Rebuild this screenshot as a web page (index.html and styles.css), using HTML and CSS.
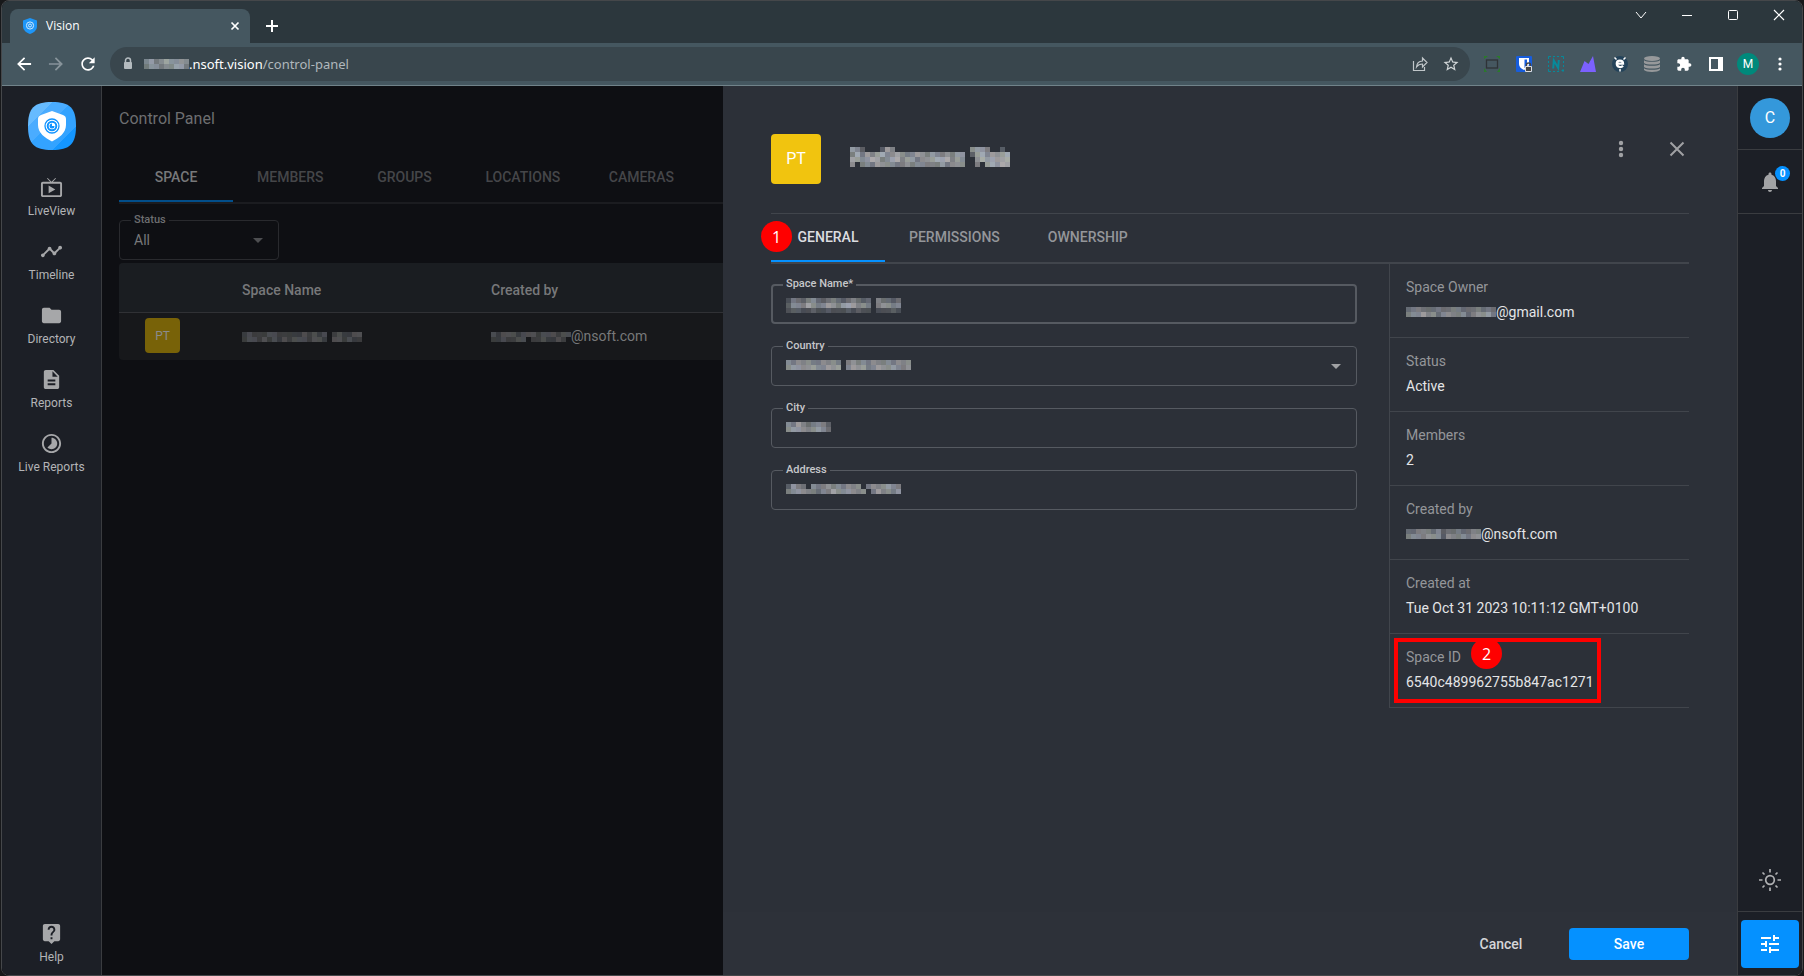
FILE: index.html
```
<!DOCTYPE html>
<html lang="en">
<head>
  <meta charset="UTF-8">
  <meta name="viewport" content="width=device-width, initial-scale=1.0">
  <title>Vision</title>
  <link rel="stylesheet" href="styles.css">
</head>
<body>
  <div class="window">

    <!-- Browser chrome -->
    <div class="titlebar">
      <div class="tab">
        <svg width="16" height="16" viewBox="0 0 16 16">
          <path d="M8 0l7 2.500v6c0 4-4 6.500-7 7.500c-3-1-7-3.500-7-7.500v-6z" fill="#1e96f8"/>
          <circle cx="8" cy="7.500" r="3.600" fill="none" stroke="#cfe8fd"/>
          <circle cx="8" cy="7.500" r="1.500" fill="none" stroke="#cfe8fd"/>
        </svg>
        <span class="tab-title">Vision</span>
        <button class="icon-btn tab-close" aria-label="Close tab">
          <svg width="10" height="10" viewBox="0 0 10 10"><path d="M1.500 1.500l7 7m0-7l-7 7" stroke="#fff" stroke-width="1.700"/></svg>
        </button>
      </div>
      <button class="icon-btn new-tab" aria-label="New tab">
        <svg width="12" height="12" viewBox="0 0 12 12"><path d="M6 0v12M0 6h12" stroke="#fff" stroke-width="2"/></svg>
      </button>
      <div class="window-controls">
        <button class="icon-btn" aria-label="Search tabs"><svg width="12" height="12" viewBox="0 0 12 12"><path d="M1 3l5 6 5-6" fill="none" stroke="#fff"/></svg></button>
        <button class="icon-btn" aria-label="Minimize"><svg width="12" height="12" viewBox="0 0 12 12"><path d="M1 6.500h10" stroke="#fff"/></svg></button>
        <button class="icon-btn" aria-label="Maximize"><svg width="12" height="12" viewBox="0 0 12 12"><rect x="1.500" y="1.500" width="9" height="9" rx="1" fill="none" stroke="#fff"/></svg></button>
        <button class="icon-btn" aria-label="Close"><svg width="12" height="12" viewBox="0 0 12 12"><path d="M1 1l10 10m0-10L1 11" stroke="#fff" stroke-width="1.200"/></svg></button>
      </div>
    </div>

    <div class="toolbar">
      <button class="icon-btn nav-btn" aria-label="Back"><svg width="20" height="20" viewBox="0 0 24 24"><path fill="#fff" d="M20.500 10.800H7.830l5.590-5.390L12 4l-8.300 8 8.300 8 1.410-1.410L7.830 13.200H20.500z"/></svg></button>
      <button class="icon-btn nav-btn" aria-label="Forward"><svg width="20" height="20" viewBox="0 0 24 24"><path fill="#87939a" d="M12 4l-1.410 1.410L16.170 11H3.500v2h12.670l-5.580 5.590L12 20l8.300-8z"/></svg></button>
      <button class="icon-btn nav-btn" aria-label="Reload"><svg width="20" height="20" viewBox="0 0 24 24"><path fill="#fff" d="M17.650 6.350C16.200 4.900 14.210 4 12 4c-4.420 0-7.990 3.580-7.990 8s3.570 8 7.990 8c3.730 0 6.840-2.550 7.730-6h-2.080c-.82 2.330-3.040 4-5.650 4-3.310 0-6-2.690-6-6s2.690-6 6-6c1.660 0 3.140.69 4.220 1.780L13 11h7V4l-2.350 2.350z"/></svg></button>
      <div class="omnibox">
        <svg width="12" height="14" viewBox="0 0 12 14"><path d="M3.500 6V3.500a2.500 2.500 0 0 1 5 0V6" fill="none" stroke="#b4bbbf" stroke-width="1.500"/><rect x="2" y="5" width="8" height="7" rx="1" fill="#b4bbbf"/></svg>
        <div class="url">
          <span class="mosaic" data-cells="574576665/466455774"></span>
          <span>.nsoft.vision<span class="url-path">/control-panel</span></span>
        </div>
        <button class="icon-btn" aria-label="Share"><svg width="18" height="18" viewBox="0 0 18 18"><path d="M2.500 6v9.500h11V12M5.500 12c.3-4 2.500-5.800 6-6V3l4.500 4.500-4.500 4.500V9C9 9 7 9.800 5.500 12z" fill="none" stroke="#c0c6c9" stroke-width="1.200"/></svg></button>
        <button class="icon-btn" aria-label="Bookmark"><svg width="18" height="18" viewBox="0 0 24 24"><path fill="#d0d5d7" d="M22 9.240l-7.190-.62L12 2 9.190 8.630 2 9.240l5.460 4.730L5.820 21 12 17.270 18.180 21l-1.630-7.030L22 9.240zM12 15.400l-3.760 2.270 1-4.280-3.320-2.880 4.380-.38L12 6.100l1.710 4.040 4.380.38-3.320 2.880 1 4.280L12 15.400z"/></svg></button>
      </div>
      <div class="extensions">
        <button class="icon-btn" aria-label="Capture"><svg width="16" height="16" viewBox="0 0 16 16"><rect x="2.500" y="4" width="11" height="8" fill="none" stroke="#2f3337" stroke-width="1.300"/><path d="M0 0h4L0 3zM16 0h-4l4 3zM0 16h3l-3-4zM16 16h-3l3-4z" fill="#2b7a2b"/></svg></button>
        <button class="icon-btn" aria-label="Passwords"><svg width="16" height="16" viewBox="0 0 16 16"><rect width="16" height="16" rx="1" fill="#175ddc"/><path d="M3 2h10v6c0 3-2.500 5-5 6-2.500-1-5-3-5-6z" fill="#fff"/><path d="M8.500 3.500H11V8c0 2-1 3-2.500 4z" fill="#175ddc"/><path d="M10.500 10.500V9a2 2 0 0 1 4 0v1.500" fill="none" stroke="#444" stroke-width="1.400"/><rect x="9" y="10" width="7" height="6" rx="1" fill="#ddd"/><rect x="10" y="11" width="5" height="4" fill="#444"/></svg></button>
        <button class="icon-btn" aria-label="Notes"><svg width="16" height="16" viewBox="0 0 16 16"><path d="M.5 3V.5H3M5 .5h2M9 .5h2M13 .5h2.500V3M.5 5v2M.5 9v2M.5 13v2.500H3M5 15.500h2M9 15.500h2M15.500 5v2M15.500 9v2M15 13v3M13.500 14.500h3" fill="none" stroke="#068a9b"/><path d="M5.200 12.500l.6-8 4.400 7.500.6-8" fill="none" stroke="#068a9b" stroke-width="2"/></svg></button>
        <button class="icon-btn" aria-label="Analytics"><svg width="16" height="16" viewBox="0 0 16 16"><path d="M0 16L4.500 5l4 3L13 0l3 16z" fill="#7b61ff"/></svg></button>
        <button class="icon-btn" aria-label="Ghost"><svg width="16" height="16" viewBox="0 0 16 16"><circle cx="8" cy="8" r="8" fill="#24435a"/><path d="M2.500 1.500l2 2M13.500 1.500l-2 2M8 13v2.500" stroke="#fff" stroke-width="1.500"/><path d="M4.800 7.600h6.200c0-4-6.200-4-6.200 0 0 4.200 4.500 4 6.200 2.200" fill="none" stroke="#fff" stroke-width="2.300"/></svg></button>
        <button class="icon-btn" aria-label="Storage"><svg width="16" height="16" viewBox="0 0 16 16" fill="#97999b"><ellipse cx="8" cy="2.500" rx="8" ry="2.500"/><path d="M0 4.300c2 2 14 2 16 0V7c-2 2-14 2-16 0zM0 8.300c2 2 14 2 16 0V11c-2 2-14 2-16 0zM0 12.300c2 2 14 2 16 0V14c-2 2.500-14 2.500-16 0z"/></svg></button>
        <button class="icon-btn" aria-label="Extensions"><svg width="16" height="16" viewBox="0 0 24 24"><path fill="#fff" d="M20.500 11H19V7c0-1.100-.9-2-2-2h-4V3.500C13 2.120 11.880 1 10.500 1S8 2.120 8 3.500V5H4c-1.100 0-1.990.9-1.990 2v3.800H3.500c1.490 0 2.700 1.210 2.700 2.700s-1.210 2.700-2.700 2.700H2V20c0 1.100.9 2 2 2h3.800v-1.500c0-1.490 1.210-2.700 2.700-2.700 1.490 0 2.700 1.210 2.700 2.700V22H17c1.100 0 2-.9 2-2v-4h1.500c1.380 0 2.500-1.120 2.500-2.500S21.880 11 20.500 11z"/></svg></button>
        <button class="icon-btn" aria-label="Side panel"><svg width="14" height="14" viewBox="0 0 14 14"><path fill="#fff" fill-rule="evenodd" d="M0 0h14v14H0zM2 2v10h7V2z"/></svg></button>
        <button class="icon-btn profile" aria-label="Profile">M</button>
        <button class="icon-btn" aria-label="Browser menu"><svg width="4" height="14" viewBox="0 0 4 14" fill="#fff"><circle cx="2" cy="2" r="1.600"/><circle cx="2" cy="7" r="1.600"/><circle cx="2" cy="12" r="1.600"/></svg></button>
      </div>
    </div>

    <div class="app">

      <!-- Left navigation -->
      <nav class="sidebar">
        <a class="logo" href="#" aria-label="Vision">
          <svg width="48" height="48" viewBox="0 0 48 48">
            <defs>
              <linearGradient id="logoFill" x1="0" y1="0" x2="1" y2="1">
                <stop offset="0" stop-color="#66bbff"/>
                <stop offset=".25" stop-color="#66bbff"/>
                <stop offset=".25" stop-color="#4aacff"/>
                <stop offset=".45" stop-color="#4aacff"/>
                <stop offset=".45" stop-color="#33a3ff"/>
                <stop offset=".75" stop-color="#33a3ff"/>
                <stop offset=".75" stop-color="#1496ff"/>
                <stop offset="1" stop-color="#1496ff"/>
              </linearGradient>
            </defs>
            <path d="M24 0C42 0 48 6 48 24S42 48 24 48 0 42 0 24 6 0 24 0z" fill="url(#logoFill)"/>
            <path d="M24 9l11 4q3 1 3 4v6c0 8-7 13-14 16.500C17 36 10 31 10 23v-6q0-3 3-4z" fill="#fff"/>
            <circle cx="24" cy="24" r="7" fill="none" stroke="#1093ff" stroke-width="1.300"/>
            <circle cx="24" cy="24" r="4.300" fill="none" stroke="#1093ff" stroke-width="2"/>
            <path d="M24 24v-2.500a2.500 2.500 0 1 0 2.500 2.500z" fill="#1093ff"/>
          </svg>
        </a>
        <a class="nav-item" href="#"><svg viewBox="0 0 24 24"><path d="M21 6h-7.590l3.290-3.290L16 2l-4 4-4-4-.71.71L10.590 6H3c-1.100 0-2 .89-2 2v12c0 1.100.9 2 2 2h18c1.100 0 2-.9 2-2V8c0-1.110-.9-2-2-2zm0 14H3V8h18v12zM9 10v8l7-4z"/></svg>LiveView</a>
        <a class="nav-item" href="#"><svg viewBox="0 0 24 24"><path d="M23 8c0 1.100-.9 2-2 2-.18 0-.35-.02-.51-.07l-3.560 3.550c.05.16.07.34.07.52 0 1.100-.9 2-2 2s-2-.9-2-2c0-.18.02-.36.07-.52l-2.550-2.550c-.16.05-.34.07-.52.07s-.36-.02-.52-.07l-4.550 4.560c.05.16.07.33.07.51 0 1.100-.9 2-2 2s-2-.9-2-2 .9-2 2-2c.18 0 .35.02.51.07l4.560-4.550C8.020 9.360 8 9.180 8 9c0-1.100.9-2 2-2s2 .9 2 2c0 .18-.02.36-.07.52l2.550 2.550c.16-.05.34-.07.52-.07s.36.02.52.07l3.550-3.560C19.020 8.350 19 8.180 19 8c0-1.100.9-2 2-2s2 .9 2 2z"/></svg>Timeline</a>
        <a class="nav-item" href="#"><svg viewBox="0 0 24 24"><path d="M10 4H4c-1.100 0-1.990.9-1.990 2L2 18c0 1.100.9 2 2 2h16c1.100 0 2-.9 2-2V8c0-1.100-.9-2-2-2h-8l-2-2z"/></svg>Directory</a>
        <a class="nav-item" href="#"><svg viewBox="0 0 24 24"><path d="M14 2H6c-1.100 0-1.990.9-1.990 2L4 20c0 1.100.89 2 1.990 2H18c1.100 0 2-.9 2-2V8l-6-6zm2 16H8v-2h8v2zm0-4H8v-2h8v2zm-3-5V3.500L18.500 9H13z"/></svg>Reports</a>
        <a class="nav-item" href="#"><svg viewBox="0 0 24 24"><path d="M16.240 7.760C15.070 6.590 13.540 6 12 6v6l-4.240 4.240c2.340 2.340 6.140 2.340 8.490 0 2.340-2.340 2.340-6.140-.01-8.480zM12 2C6.480 2 2 6.480 2 12s4.480 10 10 10 10-4.480 10-10S17.520 2 12 2zm0 18c-4.420 0-8-3.580-8-8s3.580-8 8-8 8 3.580 8 8-3.580 8-8 8z"/></svg>Live Reports</a>
        <a class="nav-item nav-help" href="#"><svg viewBox="0 0 24 24"><path d="M19 2H5c-1.110 0-2 .9-2 2v14c0 1.100.89 2 2 2h4l3 3 3-3h4c1.100 0 2-.9 2-2V4c0-1.100-.9-2-2-2zm-6 16h-2v-2h2v2zm2.070-7.750l-.9.920C13.450 11.900 13 12.500 13 14h-2v-.5c0-1.100.45-2.100 1.170-2.830l1.240-1.260c.37-.36.59-.86.59-1.410 0-1.100-.9-2-2-2s-2 .9-2 2H8c0-2.210 1.790-4 4-4s4 1.790 4 4c0 .88-.36 1.680-.93 2.250z"/></svg>Help</a>
      </nav>

      <!-- Page behind the drawer -->
      <main class="page">
        <h1>Control Panel</h1>
        <div class="tabs page-tabs">
          <button class="active">SPACE</button>
          <button>MEMBERS</button>
          <button>GROUPS</button>
          <button>LOCATIONS</button>
          <button>CAMERAS</button>
        </div>
        <div class="field status-filter">
          <label for="status">Status</label>
          <select id="status"><option>All</option></select>
          <span class="caret"></span>
        </div>
        <table class="spaces">
          <thead>
            <tr><th></th><th>Space Name</th><th>Created by</th></tr>
          </thead>
          <tbody>
            <tr>
              <td><span class="avatar avatar-small">PT</span></td>
              <td><span class="mosaic" data-cells="23222332222232323.232233/23323232323332332.332322"></span></td>
              <td><span class="mosaic" data-cells="3233323332333233/2232233.2232232"></span>@nsoft.com</td>
            </tr>
          </tbody>
        </table>
      </main>

      <!-- Space drawer -->
      <section class="drawer">
        <div class="drawer-body">
          <header class="drawer-header">
            <span class="avatar">PT</span>
            <h2><span class="mosaic" data-cells="763...375...............6775..3./58575786676567657656577.37867678/77678756885775667888576..6878778/6.565766655656655575666..5.78787"></span></h2>
            <button class="icon-btn more" aria-label="More"><svg width="6" height="18" viewBox="0 0 6 18" fill="#a0a1a4"><circle cx="3" cy="3" r="2.200"/><circle cx="3" cy="9" r="2.200"/><circle cx="3" cy="15" r="2.200"/></svg></button>
            <button class="icon-btn" aria-label="Close drawer"><svg width="16" height="16" viewBox="0 0 16 16"><path d="M1.500 1.500l13 13m0-13l-13 13" stroke="#a0a1a4" stroke-width="2"/></svg></button>
          </header>
          <div class="tabs drawer-tabs">
            <button class="active">GENERAL<span class="step step-general">1</span></button>
            <button>PERMISSIONS</button>
            <button>OWNERSHIP</button>
          </div>
          <div class="columns">
            <form class="form">
              <div class="field focused">
                <label for="name">Space Name*</label>
                <input id="name" type="text">
                <span class="mosaic" data-cells="25435643454345434.54434/36657656765787565.56656/23322322322232322.22232"></span>
              </div>
              <div class="field">
                <label for="country">Country</label>
                <select id="country"><option></option></select>
                <span class="mosaic" data-cells="65656556565.5656565565656/67766766767.6767567667656"></span>
                <span class="caret"></span>
              </div>
              <div class="field">
                <label for="city">City</label>
                <input id="city" type="text">
                <span class="mosaic" data-cells="657545653/677656764"></span>
              </div>
              <div class="field">
                <label for="address">Address</label>
                <input id="address" type="text">
                <span class="mosaic" data-cells="3754.6556565656.5656765/5676554657667656.575657"></span>
              </div>
            </form>
            <dl class="details">
              <div><dt>Space Owner</dt><dd><span class="mosaic" data-cells="455444544554445454/566756466556456675"></span>@gmail.com</dd></div>
              <div><dt>Status</dt><dd>Active</dd></div>
              <div><dt>Members</dt><dd>2</dd></div>
              <div><dt>Created by</dt><dd><span class="mosaic" data-cells="445554634454455/566566636556566"></span>@nsoft.com</dd></div>
              <div><dt>Created at</dt><dd>Tue Oct 31 2023 10:11:12 GMT+0100</dd></div>
              <div class="space-id"><dt>Space ID</dt><dd>6540c489962755b847ac1271</dd><span class="callout"></span><span class="step step-id">2</span></div>
            </dl>
          </div>
        </div>
        <footer class="drawer-footer">
          <button class="btn">Cancel</button>
          <button class="btn btn-primary">Save</button>
        </footer>
      </section>

      <!-- Right rail -->
      <aside class="rail">
        <button class="rail-cell" aria-label="Account"><span class="user">C</span></button>
        <button class="rail-cell" aria-label="Notifications">
          <span class="bell"><svg width="24" height="24" viewBox="0 0 24 24"><path fill="#a2a3a5" d="M12 22c1.100 0 2-.9 2-2h-4c0 1.100.89 2 2 2zm6-6v-5c0-3.070-1.640-5.640-4.500-6.320V4c0-.83-.67-1.500-1.500-1.500s-1.500.67-1.500 1.500v.68C7.630 5.360 6 7.920 6 11v5l-2 2v1h16v-1l-2-2z"/></svg><span class="count">0</span></span>
        </button>
        <button class="rail-cell theme" aria-label="Theme"><svg width="22" height="22" viewBox="0 0 22 22" fill="none" stroke="#b0b1b3" stroke-width="1.700"><circle cx="11" cy="11" r="4.300"/><path d="M11 0v3.500M11 18.500V22M0 11h3.500M18.500 11H22M3.500 3.500l2 2M16.500 16.500l2 2M3.500 18.500l2-2M16.500 5.500l2-2"/></svg></button>
        <button class="settings" aria-label="Control panel"><svg width="24" height="24" viewBox="0 0 24 24"><path fill="#fff" d="M3 17v2h6v-2H3zM3 5v2h10V5H3zm10 16v-2h8v-2h-8v-2h-2v6h2zM7 9v2H3v2h4v2h2V9H7zm14 4v-2H11v2h10zm-6-4h2V7h4V5h-4V3h-2v6z"/></svg></button>
      </aside>
    </div>
  </div>
  <script src="mosaic.js"></script>
</body>
</html>
```
FILE: styles.css
```
* {
  box-sizing: border-box;
}
body {
  margin: 0;
  background: #17181a;
  color: #e4e5e7;
  font: 14px/20px Roboto, sans-serif;
  overflow: hidden;
}
button, input, select {
  font: inherit;
  color: inherit;
  margin: 0;
}
button {
  background: none;
  border: none;
  padding: 0;
  cursor: pointer;
}
a {
  color: inherit;
  text-decoration: none;
}
svg {
  display: block;
}
.window {
  display: flex;
  flex-direction: column;
  height: 100vh;
  border: 1px solid #45474a;
  border-radius: 8px;
  margin: 0 1px;
  overflow: hidden;
}
.icon-btn {
  display: flex;
  align-items: center;
  justify-content: center;
}

/* browser chrome */
.titlebar {
  display: flex;
  align-items: flex-end;
  height: 42px;
  flex: none;
  background: #2c373d;
  padding-left: 8px;
  font-family: "Open Sans", sans-serif;
}
.tab {
  display: flex;
  align-items: center;
  gap: 8px;
  width: 240px;
  height: 34px;
  padding: 0 10px 0 12px;
  border-radius: 8px 8px 0 0;
  background: #455760;
  font-size: 12px;
  color: #fff;
}
.tab-close {
  margin-left: auto;
}
.new-tab {
  width: 28px;
  height: 34px;
  margin-left: 8px;
}
.window-controls {
  display: flex;
  align-self: flex-start;
  margin-left: auto;
}
.window-controls button {
  width: 46px;
  height: 28px;
}
.toolbar {
  display: flex;
  align-items: center;
  height: 43px;
  flex: none;
  padding: 0 6px;
  background: #455760;
  border-bottom: 1px solid #71838a;
}
.nav-btn {
  width: 32px;
  height: 32px;
}
.omnibox {
  display: flex;
  align-items: center;
  flex: 1;
  height: 34px;
  margin-left: 6px;
  padding: 0 10px 0 12px;
  border-radius: 17px;
  background: #39464d;
  font: 13px/20px "Noto Sans", sans-serif;
  color: #fff;
}
.omnibox button {
  width: 18px;
  margin-left: 13px;
}
.url {
  display: flex;
  align-items: center;
  flex: 1;
  margin-left: 10px;
}
.url-path {
  color: #b0b8bc;
}
.extensions {
  display: flex;
  margin-left: 6px;
}
.extensions button {
  width: 32px;
  height: 32px;
}
.extensions .profile {
  width: 22px;
  height: 22px;
  margin: 5px;
  border-radius: 50%;
  background: #00897b;
  color: #fff;
  font-size: 12px;
}

/* app shell */
.app {
  display: flex;
  flex: 1;
  min-height: 0;
  background: #0e0f13;
}
.sidebar {
  display: flex;
  flex-direction: column;
  align-items: center;
  width: 100px;
  flex: none;
  background: #1c1f26;
  border-right: 1px solid #3a3c40;
}
.logo {
  margin: 16px 0 20px;
}
.nav-item {
  display: flex;
  flex-direction: column;
  align-items: center;
  height: 64px;
  padding-top: 6px;
  font-size: 12px;
  line-height: 20px;
  color: #b3b4b6;
}
.nav-item svg {
  width: 23px;
  height: 23px;
  margin-bottom: 2px;
  fill: #a6a7a9;
}
.nav-help {
  margin-top: auto;
  height: 59px;
}

.page {
  width: 621px;
  flex: none;
  padding: 23px 0 0 17px;
  overflow: hidden;
}
h1 {
  margin: 0 0 22px;
  font-size: 16px;
  line-height: 20px;
  font-weight: 400;
  color: #6d6e70;
}
.tabs {
  display: flex;
  font-weight: 500;
}
.tabs button {
  position: relative;
  min-width: 114px;
  padding: 0 24px;
  border-bottom: 2px solid transparent;
}
.page-tabs {
  height: 53px;
  border-bottom: 2px solid #1b1c20;
  color: #454649;
}
.page-tabs button {
  padding-top: 2px;
}
.page-tabs .active {
  color: #77787a;
  border-color: #024e8a;
}

/* outlined fields */
.field {
  position: relative;
  height: 40px;
}
.field label {
  position: absolute;
  top: -7px;
  left: 12px;
  padding: 0 3px;
  font-size: 11px;
  line-height: 14px;
  font-weight: 500;
  color: #c6c7ca;
  background: #2c3038;
}
.field input, .field select {
  display: block;
  width: 100%;
  height: 40px;
  padding: 0 14px;
  border: 1px solid #565a61;
  border-radius: 4px;
  background: transparent;
  appearance: none;
  outline: none;
}
.field.focused input {
  border-width: 2px;
}
.field .mosaic {
  position: absolute;
  left: 15px;
  top: 14px;
}
.caret {
  position: absolute;
  right: 16px;
  top: 18px;
  border: 5px solid transparent;
  border-top-color: #a0a1a4;
  border-bottom: none;
}
.status-filter {
  width: 160px;
  margin: 16px 0 3px;
  color: #77787a;
}
.status-filter label {
  background: #0e0f13;
  color: #6d6e70;
}
.status-filter select {
  border-color: #292a2e;
}
.status-filter .caret {
  border-top-color: #4d4e51;
}

.spaces {
  width: 100%;
  border-collapse: separate;
  border-spacing: 0;
  table-layout: fixed;
  border-radius: 4px 0 0 4px;
  overflow: hidden;
  background: #17181b;
  color: #77787a;
}
.spaces th {
  height: 50px;
  padding: 4px 0 0;
  text-align: left;
  font-weight: 500;
  background: #1a1d21;
  border-bottom: 1px solid #303135;
}
.spaces td {
  height: 47px;
  padding: 0 0 2px;
}
.spaces th:first-child {
  width: 123px;
}
.spaces th:nth-child(2) {
  width: 249px;
}
.spaces td:first-child {
  padding-left: 26px;
}
.avatar {
  display: flex;
  align-items: center;
  justify-content: center;
  width: 50px;
  height: 50px;
  border-radius: 4px;
  background: #f1c40f;
  color: #fff;
  font-size: 16px;
}
.avatar-small {
  width: 35px;
  height: 35px;
  background: #786208;
  color: #8a8b8c;
  font-size: 12px;
}

/* drawer */
.drawer {
  display: flex;
  flex-direction: column;
  flex: 1;
  min-width: 0;
  background: #2c3038;
}
.drawer-body {
  flex: 1;
  padding: 0 48px;
}
.drawer-header {
  display: flex;
  align-items: center;
  height: 128px;
  padding-top: 18px;
  border-bottom: 1px solid #41454c;
}
.drawer-header h2 {
  flex: 1;
  margin: 0 0 4px 29px;
}
.drawer-header button {
  width: 24px;
  height: 24px;
  margin-bottom: 20px;
}
.drawer-header .more {
  margin-right: 32px;
}
.drawer-tabs {
  height: 50px;
  border-bottom: 2px solid #41454c;
  color: #94969a;
}
.drawer-tabs .active {
  color: #dcdde0;
  border-color: #0591ff;
}
.columns {
  display: flex;
  gap: 32px;
}
.form {
  display: flex;
  flex-direction: column;
  gap: 22px;
  flex: 1;
  padding-top: 20px;
}
.details {
  width: 300px;
  margin: 0;
  border-left: 1px solid #41454c;
}
.details div {
  position: relative;
  height: 74px;
  padding: 13px 16px 0;
  border-bottom: 1px solid #41454c;
}
.details dt {
  margin-bottom: 5px;
  color: #94969a;
}
.details dd {
  display: flex;
  align-items: center;
  margin: 0;
  color: #e4e5e7;
}
.drawer-footer {
  display: flex;
  align-items: center;
  justify-content: flex-end;
  gap: 8px;
  height: 63px;
  flex: none;
  padding: 0 48px;
  background: #2d3139;
}
.btn {
  width: 120px;
  height: 32px;
  border-radius: 4px;
  font-weight: 500;
  color: #d5d6d8;
}
.btn-primary {
  background: #0591ff;
  color: #fff;
}

/* numbered callouts over the drawer */
.step {
  position: absolute;
  display: flex;
  align-items: center;
  justify-content: center;
  width: 31px;
  height: 31px;
  border-radius: 50%;
  background: #f00;
  color: #fff;
  font: 16px/20px "Open Sans", sans-serif;
}
.step-general {
  left: -10px;
  top: 7px;
}
.step-id {
  left: 81px;
  top: 4px;
}
.callout {
  position: absolute;
  left: 4px;
  top: 4px;
  width: 207px;
  height: 65px;
  border: 4px solid #f00;
}

/* right rail */
.rail {
  display: flex;
  flex-direction: column;
  align-items: center;
  width: 65px;
  flex: none;
  background: #1c1f26;
  border-left: 1px solid #3a3c40;
}
.rail-cell {
  display: flex;
  align-items: center;
  justify-content: center;
  width: 100%;
  height: 64px;
  border-bottom: 1px solid #3a3c40;
}
.user {
  display: flex;
  align-items: center;
  justify-content: center;
  width: 40px;
  height: 40px;
  border-radius: 50%;
  background: #3498db;
  color: #fff;
  font-size: 16px;
}
.bell {
  position: relative;
}
.count {
  position: absolute;
  top: -4px;
  right: -8px;
  width: 15px;
  height: 15px;
  border-radius: 50%;
  background: #0591ff;
  color: #fff;
  font-size: 10px;
  line-height: 15px;
  font-weight: 700;
}
.theme {
  margin-top: auto;
}
.settings {
  display: flex;
  align-items: center;
  justify-content: center;
  width: 58px;
  height: 48px;
  margin: 8px 0 7px;
  border-radius: 4px;
  background: #0591ff;
}

/* pixelated private values */
.mosaic {
  display: inline-block;
  vertical-align: middle;
  flex: none;
}
```
FILE: mosaic.js
```
// Draws each private value as a block of grey cells.
// data-cells: rows split by "/", one digit of brightness per cell, "." is empty
const CELL = 5;
const TINTS = ["190,200,210", "205,200,200", "200,205,195", "185,190,205", "210,210,212"];
const NS = "http://www.w3.org/2000/svg";

document.querySelectorAll(".mosaic").forEach(el => {
  const rows = el.dataset.cells.split("/");
  const svg = document.createElementNS(NS, "svg");
  svg.setAttribute("width", Math.max(...rows.map(r => r.length)) * CELL);
  svg.setAttribute("height", rows.length * CELL);
  rows.forEach((row, y) => {
    [...row].forEach((shade, x) => {
      if (shade === ".") return;
      const rect = document.createElementNS(NS, "rect");
      rect.setAttribute("x", x * CELL);
      rect.setAttribute("y", y * CELL);
      rect.setAttribute("width", CELL);
      rect.setAttribute("height", CELL);
      rect.setAttribute("fill", `rgba(${TINTS[(x * 3 + y * 2) % 5]},${shade / 10})`);
      svg.appendChild(rect);
    });
  });
  el.appendChild(svg);
});
```
